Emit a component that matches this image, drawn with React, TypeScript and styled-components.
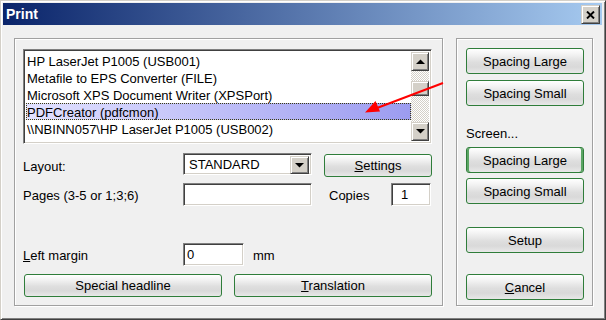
import React from 'react';
import styled, { createGlobalStyle, css } from 'styled-components';

const GlobalStyle = createGlobalStyle`
  html, body { margin: 0; padding: 0; background: #fff; }
  body {
    font-family: 'Liberation Sans', Arial, sans-serif;
    font-size: 13px;
    color: #000;
  }
  * { box-sizing: border-box; }
`;

const raised = css`
  background: #d4d0c8;
  border: 1px solid;
  border-color: #d4d0c8 #404040 #404040 #d4d0c8;
  box-shadow: inset 1px 1px #fff, inset -1px -1px #808080;
`;

const sunken = css`
  background: #fff;
  border: 1px solid;
  border-color: #808080 #fff #fff #808080;
  box-shadow: inset 1px 1px #404040, inset -1px -1px #d4d0c8;
`;

const Window = styled.div`
  position: relative;
  width: 606px;
  height: 320px;
  display: flex;
  flex-direction: column;
  background: #f0f0f0;
  border: 1px solid;
  border-color: #d4d0c8 #404040 #404040 #d4d0c8;
  box-shadow: inset 1px 1px #fff, inset -1px -1px #808080;
  padding: 2px 3px 3px 2px;
`;

const TitleBar = styled.div`
  height: 22px;
  flex: none;
  display: flex;
  align-items: flex-start;
  justify-content: space-between;
  padding: 0 2px 0 3px;
  background: linear-gradient(to right, #0a246a, #a6caf0);
`;

const TitleText = styled.span`
  font-weight: bold;
  font-size: 14px;
  line-height: 22px;
  color: #fff;
`;

const CloseButton = styled.div`
  ${raised};
  width: 19px;
  height: 19px;
  margin-top: 2px;
  display: flex;
  align-items: center;
  justify-content: center;
`;

const Body = styled.div`
  flex: 1;
  display: flex;
  gap: 13px;
  padding: 13px 9px 0 11px;
`;

const Group = styled.div<{ $w: number }>`
  width: ${(p) => p.$w}px;
  height: 268px;
  border: 1px solid #a0a0a0;
  box-shadow: 1px 1px 0 #fff, inset 1px 1px 0 #fff;
  display: flex;
  flex-direction: column;
`;

const LeftGroup = styled(Group)`
  padding: 10px 0 0 8px;
`;

const RightGroup = styled(Group)`
  padding: 9px 0 0 9px;
`;

const ListBox = styled.div`
  ${sunken};
  width: 409px;
  height: 95px;
  padding: 2px;
  display: flex;
  overflow: hidden;
`;

const Items = styled.div`
  flex: 1;
  overflow: hidden;
`;

const Item = styled.div<{ $selected?: boolean }>`
  height: 17px;
  line-height: 17px;
  padding: 1px 0 0 1px;
  white-space: nowrap;
  ${(p) =>
    p.$selected &&
    css`
      background: linear-gradient(to right, #e2e2ff, #9c9cf0);
      outline: 1px dotted #3c3c10;
      outline-offset: -1px;
    `}
`;

const ScrollBar = styled.div`
  width: 18px;
  display: flex;
  flex-direction: column;
`;

const ScrollButton = styled.div`
  ${raised};
  height: 19px;
  flex: none;
  display: flex;
  align-items: center;
  justify-content: center;
`;

const Track = styled.div`
  flex: 1;
  padding-top: 10px;
  background-color: #fff;
  background-image: conic-gradient(#fff 25%, #d4d0c8 0 50%, #fff 0 75%, #d4d0c8 0);
  background-size: 2px 2px;
`;

const Thumb = styled.div`
  ${raised};
  height: 15px;
`;

const Row = styled.div<{ $mt: number; $h: number }>`
  display: flex;
  align-items: flex-start;
  margin-top: ${(p) => p.$mt}px;
  height: ${(p) => p.$h}px;
`;

const Label = styled.span<{ $w?: number; $mt?: number; $ml?: number }>`
  line-height: 15px;
  white-space: nowrap;
  width: ${(p) => (p.$w ? `${p.$w}px` : 'auto')};
  margin-top: ${(p) => p.$mt ?? 0}px;
  margin-left: ${(p) => p.$ml ?? 0}px;
`;

const TextField = styled.div<{ $w: number; $pl?: number }>`
  ${sunken};
  width: ${(p) => p.$w}px;
  height: 23px;
  line-height: 15px;
  padding: 3px 0 0 ${(p) => p.$pl ?? 3}px;
`;

const Combo = styled.div`
  ${sunken};
  width: 129px;
  height: 22px;
  display: flex;
  padding: 2px;
`;

const ComboText = styled.span`
  flex: 1;
  line-height: 15px;
  padding: 1px 0 0 3px;
`;

const ComboButton = styled(ScrollButton)`
  width: 19px;
  height: 18px;
`;

const Button = styled.div<{ $w: number; $h: number; $ml?: number; $mt?: number; $default?: boolean }>`
  width: ${(p) => p.$w}px;
  height: ${(p) => p.$h}px;
  margin-left: ${(p) => p.$ml ?? 0}px;
  margin-top: ${(p) => p.$mt ?? 0}px;
  flex: none;
  display: flex;
  align-items: center;
  justify-content: center;
  line-height: 15px;
  border: 1px solid #2f7d3a;
  border-radius: 3px;
  background: linear-gradient(to bottom, #ffffff 0%, #f3f3f3 22%, #dedede 55%, #d9d9d9 75%, #e8e8e8 100%);
  ${(p) =>
    p.$default &&
    css`
      box-shadow: inset 2px 0 0 #5aa463, inset -2px 0 0 #5aa463;
    `}
`;

const ScreenLabel = styled.span`
  line-height: 16px;
  margin-top: 20px;
`;

const Arrow = styled.svg`
  position: absolute;
  left: 0;
  top: 0;
  pointer-events: none;
`;

const printers = [
  'HP LaserJet P1005 (USB001)',
  'Metafile to EPS Converter (FILE)',
  'Microsoft XPS Document Writer (XPSPort)',
  'PDFCreator (pdfcmon)',
  '\\\\NBINN057\\HP LaserJet P1005 (USB002)',
  'LEED (Export File)',
];

const TriangleUp = () => (
  <svg width="9" height="5" viewBox="0 0 9 5">
    <polygon points="0,5 9,5 4.5,0.5" fill="#000" />
  </svg>
);

const TriangleDown = () => (
  <svg width="9" height="5" viewBox="0 0 9 5">
    <polygon points="0,0 9,0 4.5,4.5" fill="#000" />
  </svg>
);

const App = () => (
  <>
    <GlobalStyle />
    <Window>
      <TitleBar>
        <TitleText>Print</TitleText>
        <CloseButton>
          <svg width="9" height="8" viewBox="0 0 9 8">
            <path d="M1 0.5 L8 7.5 M8 0.5 L1 7.5" stroke="#000" strokeWidth="1.9" />
          </svg>
        </CloseButton>
      </TitleBar>
      <Body>
        <LeftGroup $w={429}>
          <ListBox>
            <Items>
              {printers.map((name, i) => (
                <Item key={name} $selected={i === 3}>
                  {name}
                </Item>
              ))}
            </Items>
            <ScrollBar>
              <ScrollButton>
                <TriangleUp />
              </ScrollButton>
              <Track>
                <Thumb />
              </Track>
              <ScrollButton>
                <TriangleDown />
              </ScrollButton>
            </ScrollBar>
          </ListBox>

          <Row $mt={9} $h={24}>
            <Label $w={160} $mt={6}>Layout:</Label>
            <Combo>
              <ComboText>STANDARD</ComboText>
              <ComboButton>
                <TriangleDown />
              </ComboButton>
            </Combo>
            <Button $w={108} $h={23} $ml={12} $mt={1}>
              <span><u>S</u>ettings</span>
            </Button>
          </Row>

          <Row $mt={6} $h={23}>
            <Label $w={160} $mt={5}>Pages (3-5 or 1;3;6)</Label>
            <TextField $w={129} />
            <Label $w={62} $mt={5} $ml={17}>Copies</Label>
            <TextField $w={40} $pl={9}>1</TextField>
          </Row>

          <Row $mt={37} $h={23}>
            <Label $w={160} $mt={5}><u>L</u>eft margin</Label>
            <TextField $w={61}>0</TextField>
            <Label $mt={5} $ml={9}>mm</Label>
          </Row>

          <Row $mt={8} $h={23}>
            <Button $w={198} $h={23} $ml={1}>Special headline</Button>
            <Button $w={198} $h={23} $ml={12}>
              <span><u>T</u>ranslation</span>
            </Button>
          </Row>
        </LeftGroup>

        <RightGroup $w={137}>
          <Button $w={118} $h={26}>Spacing Large</Button>
          <Button $w={118} $h={26} $mt={6}>Spacing Small</Button>
          <ScreenLabel>Screen...</ScreenLabel>
          <Button $w={118} $h={26} $mt={5} $default>Spacing Large</Button>
          <Button $w={118} $h={26} $mt={5}>Spacing Small</Button>
          <Button $w={118} $h={26} $mt={23}>Setup</Button>
          <Button $w={118} $h={26} $mt={21}>
            <span><u>C</u>ancel</span>
          </Button>
        </RightGroup>
      </Body>

      <Arrow width="606" height="320" viewBox="0 0 606 320">
        <line x1="442" y1="82" x2="376" y2="107" stroke="#ff0000" strokeWidth="2" />
        <polygon points="364,111.5 379,110.5 374.5,100" fill="#ff0000" />
      </Arrow>
    </Window>
  </>
);

export default App;
